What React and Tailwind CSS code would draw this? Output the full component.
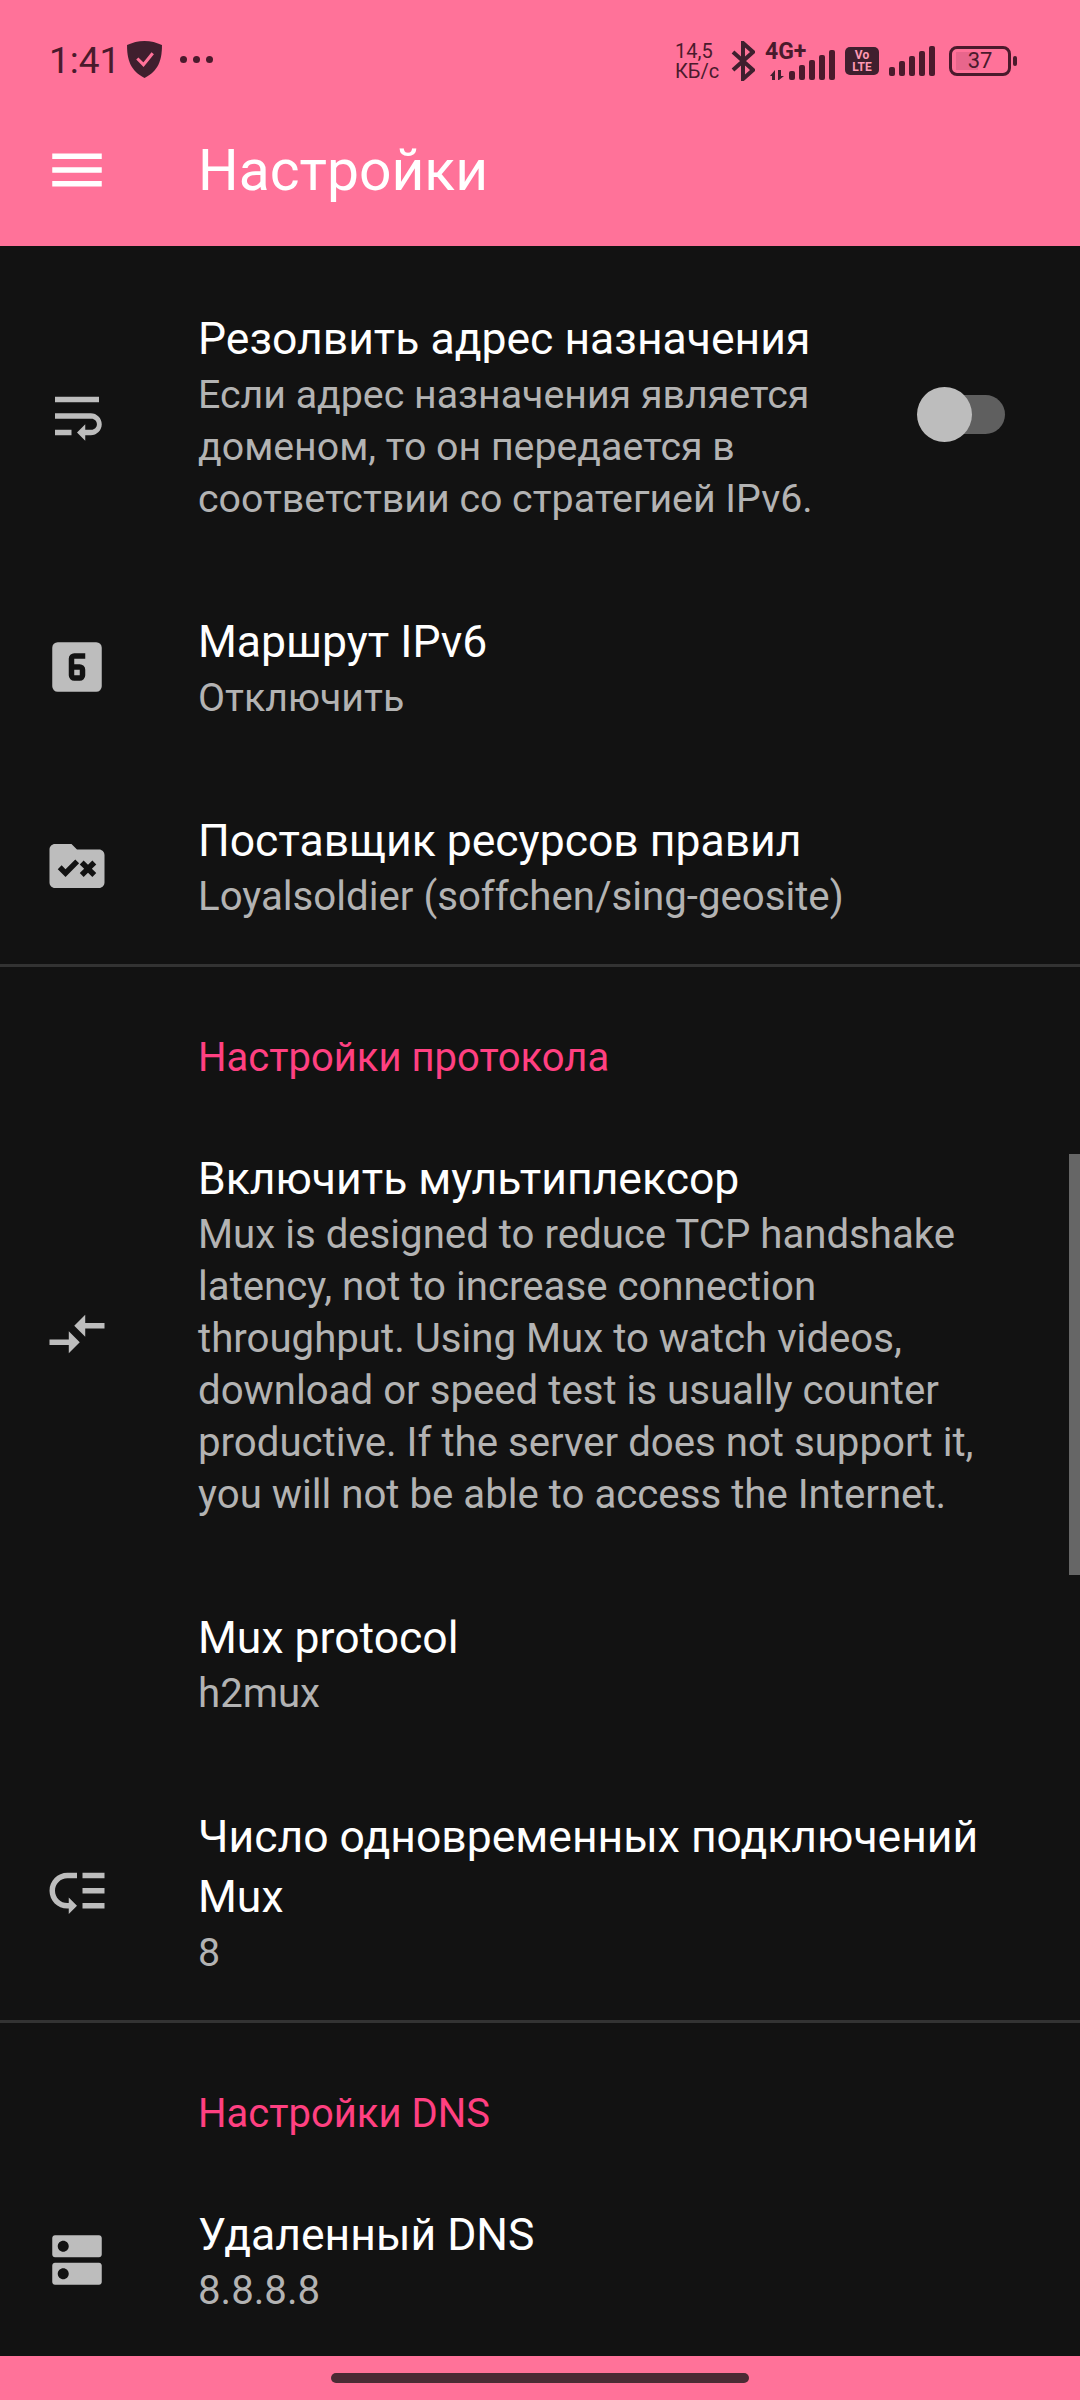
const icons = {
  wrap: 'M4 19h6v-2H4v2zM20 5H4v2h16V5zm-3 6H4v2h13.25c1.1 0 2 .9 2 2s-.9 2-2 2H15v-2l-3 3 3 3v-2h2c2.21 0 4-1.79 4-4s-1.79-4-4-4z',
  six: 'M5,3H19A2,2 0 0,1 21,5V19A2,2 0 0,1 19,21H5A2,2 0 0,1 3,19V5A2,2 0 0,1 5,3M11,7A2,2 0 0,0 9,9V15A2,2 0 0,0 11,17H13A2,2 0 0,0 15,15V13A2,2 0 0,0 13,11H11V9H15V7H11M11,13H13V15H11V13Z',
  rule: 'M20 6h-8l-2-2H4c-1.1 0-2 .9-2 2v12c0 1.1.9 2 2 2h16c1.1 0 2-.9 2-2V8c0-1.1-.9-2-2-2zM7.83 16L5 13.17l1.41-1.41 1.41 1.41 3.54-3.54 1.41 1.41L7.83 16zm9.58-3L19 14.59 17.59 16 16 14.41 14.41 16 13 14.59 14.59 13 13 11.41 14.41 10 16 11.59 17.59 10 19 11.41 17.41 13z',
  compare: 'M9.01 14H2v2h7.01v3L13 15l-3.99-4v3zm5.98-1v-3H22V8h-7.01V5L11 9l3.99 4z',
  low: 'M14 5h8v2h-8zm0 5.5h8v2h-8zm0 5.5h8v2h-8zM2 11.5C2 15.08 4.92 18 8.5 18H9v2l3-3-3-3v2h-.5C6.02 16 4 13.98 4 11.5S6.02 7 8.5 7H12V5H8.5C4.92 5 2 7.92 2 11.5z',
  dns: 'M20 13H4c-.55 0-1 .45-1 1v6c0 .55.45 1 1 1h16c.55 0 1-.45 1-1v-6c0-.55-.45-1-1-1zM7 19c-1.1 0-2-.9-2-2s.9-2 2-2 2 .9 2 2-.9 2-2 2zM20 3H4c-.55 0-1 .45-1 1v6c0 .55.45 1 1 1h16c.55 0 1-.45 1-1V4c0-.55-.45-1-1-1zM7 9c-1.1 0-2-.9-2-2s.9-2 2-2 2 .9 2 2-.9 2-2 2z',
  menu: 'M3 18h18v-2H3v2zm0-5h18v-2H3v2zm0-7v2h18V6H3z',
};

const Icon = ({ d }) => (
  <svg viewBox="0 0 24 24" className="w-[66px] h-[66px] shrink-0 fill-current">
    <path d={d} />
  </svg>
);

const Bars = () => (
  <div className="flex items-end gap-[4px] h-[30px]">
    <div className="w-[6px] h-[9px] rounded-[2px] bg-[#4a1a2c]" />
    <div className="w-[6px] h-[15px] rounded-[2px] bg-[#4a1a2c]" />
    <div className="w-[6px] h-[20px] rounded-[2px] bg-[#4a1a2c]" />
    <div className="w-[6px] h-[25px] rounded-[2px] bg-[#4a1a2c]" />
    <div className="w-[6px] h-[30px] rounded-[2px] bg-[#4a1a2c]" />
  </div>
);

const StatusBar = () => (
  <div className="h-[88px] flex items-center justify-between pl-[49px] pr-[63px] pt-[33px] text-[#4a1a2c]">
    <div className="flex items-center">
      <span className="text-[37px] leading-none w-[76px]">1:41</span>
      <svg viewBox="0 0 34 36" className="w-[35px] h-[37px] ml-[2px] -mt-[2px]">
        <path d="M17 0C11 0 5 1.5 0 4c0 14 3 25 17 32C31 29 34 18 34 4 29 1.5 23 0 17 0z" fill="#3f1f2e" />
        <path d="M10 17l6 6 9-11" fill="none" stroke="#ff7299" strokeWidth="3" />
      </svg>
      <div className="flex gap-[6px] ml-[18px] -mt-[2px]">
        <div className="w-[7px] h-[7px] rounded-full bg-[#4a1a2c]" />
        <div className="w-[7px] h-[7px] rounded-full bg-[#4a1a2c]" />
        <div className="w-[7px] h-[7px] rounded-full bg-[#4a1a2c]" />
      </div>
    </div>
    <div className="flex items-center">
      <div className="text-[20px] leading-[20px] w-[56px]">
        <div>14,5</div>
        <div>КБ/с</div>
      </div>
      <svg viewBox="0 0 24 40" className="w-[24px] h-[40px]">
        <path d="M2 11l20 18-10 9V2l10 9L2 29" fill="none" stroke="#3f1f2e" strokeWidth="4" />
      </svg>
      <div className="relative w-[71px] h-[34px] ml-[10px] mt-[4px]">
        <span className="absolute left-0 -top-[6px] text-[23px] leading-none font-bold">4G+</span>
        <svg viewBox="0 0 18 10" className="absolute left-[4px] bottom-0 w-[18px] h-[10px]">
          <path d="M1 6l5-6v10H3V6zM9 0h3v6h3l-5 4H9z" fill="#3f1f2e" />
        </svg>
        <div className="absolute left-[24px] bottom-0"><Bars /></div>
      </div>
      <div className="w-[34px] h-[28px] ml-[9px] rounded-[5px] bg-[#3f1f2e] text-[#ff9ab5] text-[12px] leading-[12px] font-bold text-center pt-[2px]">
        <div>Vo</div>
        <div>LTE</div>
      </div>
      <div className="ml-[10px]"><Bars /></div>
      <div className="flex items-center ml-[14px]">
        <div className="relative w-[62px] h-[30px] rounded-[8px] border-[3px] border-[#4a1a2c] flex items-center justify-center text-[22px] leading-none">
          <div className="absolute left-[4px] top-[3px] bottom-[3px] w-[22px] bg-[#e8668c]" />
          <span className="relative">37</span>
        </div>
        <div className="w-[4px] h-[10px] ml-[2px] rounded-[2px] bg-[#4a1a2c]" />
      </div>
    </div>
  </div>
);

const Row = ({ icon, title, desc, latin, children }) => (
  <div className="flex items-center pl-[44px] pr-[44px] pt-[43px] pb-[44px]">
    <div className="w-[154px] shrink-0 -mt-[3px] text-[#bdbdbd]">{icon && <Icon d={icon} />}</div>
    <div className="flex-1 min-w-0">
      <div className="text-white text-[44.5px] leading-[60px]">{title}</div>
      <div className={latin ? 'text-[#b3b3b3] text-[40.2px] leading-[52px] whitespace-nowrap' : 'text-[#b3b3b3] text-[39.3px] leading-[52px] whitespace-nowrap'}>{desc}</div>
    </div>
    {children}
  </div>
);

const Divider = () => <div className="h-[3px] -mt-[3px] bg-[#333333]" />;

const Category = ({ children }) => (
  <div className="pl-[198px] pt-[65px] pb-[22px] text-[#ff4081] text-[40px] leading-[52px]">{children}</div>
);

export default function App() {
  return (
    <div className="relative w-[1080px] h-[2400px] flex flex-col overflow-hidden bg-[#121212]" style={{ fontFamily: 'Roboto, sans-serif' }}>
      <header className="h-[246px] shrink-0 bg-[#ff7299]">
        <StatusBar />
        <div className="flex items-center h-[158px] pl-[44px] pt-[6px] text-white">
          <Icon d={icons.menu} />
          <span className="ml-[88px] text-[57px] leading-none">Настройки</span>
        </div>
      </header>

      <main className="flex-1 min-h-0 pt-[20px]">
        <Row
          icon={icons.wrap}
          title="Резолвить адрес назначения"
          desc={<>Если адрес назначения является<br />доменом, то он передается в<br />соответствии со стратегией IPv6.</>}
        >
          <div className="relative w-[78px] h-[39px] mr-[31px] mb-[6px] shrink-0 rounded-full bg-[#5f5f5f]">
            <div className="absolute -left-[10px] -top-[8px] w-[55px] h-[55px] rounded-full bg-[#bdbdbd]" />
          </div>
        </Row>
        <Row icon={icons.six} title="Маршрут IPv6" desc="Отключить" />
        <Row icon={icons.rule} title="Поставщик ресурсов правил" desc="Loyalsoldier (soffchen/sing-geosite)" latin />
        <Divider />
        <Category>Настройки протокола</Category>
        <Row
          icon={icons.compare}
          title="Включить мультиплексор"
          latin
          desc={<>Mux is designed to reduce TCP handshake<br />latency, not to increase connection<br />throughput. Using Mux to watch videos,<br />download or speed test is usually counter<br />productive. If the server does not support it,<br />you will not be able to access the Internet.</>}
        />
        <Row title="Mux protocol" desc="h2mux" latin />
        <Row icon={icons.low} title="Число одновременных подключений Mux" desc="8" />
        <Divider />
        <Category>Настройки DNS</Category>
        <Row icon={icons.dns} title="Удаленный DNS" desc="8.8.8.8" latin />
      </main>

      <div className="h-[44px] shrink-0 bg-[#ff7299] flex justify-center pt-[17px]">
        <div className="w-[418px] h-[10px] rounded-full bg-[#4a2a34]" />
      </div>

      {/* scrollbar */}
      <div className="absolute right-0 top-[1154px] w-[11px] h-[421px] bg-[#666666]" />
    </div>
  );
}
